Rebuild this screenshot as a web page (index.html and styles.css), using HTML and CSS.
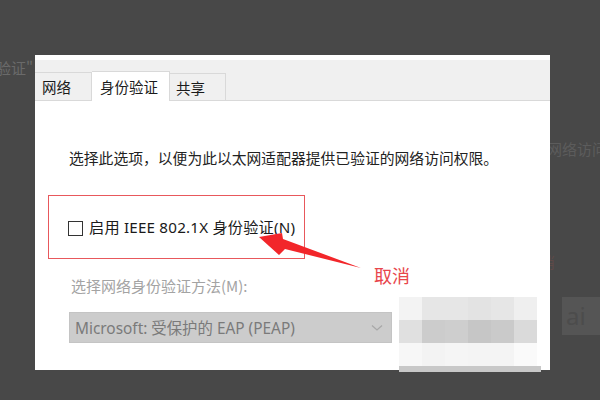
FILE: index.html
```html
<!DOCTYPE html>
<html lang="zh-CN">
<head>
<meta charset="utf-8">
<link rel="stylesheet" href="styles.css">
</head>
<body>
<div class="desk">
  <div class="bg-text bg-left">验证"</div>
  <div class="bg-text bg-right">网络访问</div>
  <div class="bg-text bg-red">消</div>
  <div class="bg-box">ai</div>

  <div class="dialog">
    <div class="tabbar">
      <div class="tab tab-net">网络</div>
      <div class="tab tab-active">身份验证</div>
      <div class="tab tab-share">共享</div>
    </div>
    <div class="content">
      <p class="desc">选择此选项，以便为此以太网适配器提供已验证的网络访问权限。</p>
      <div class="redbox">
        <span class="check"></span>
        <span class="check-label">启用 IEEE 802.1X 身份验证(N)</span>
      </div>
      <p class="method">选择网络身份验证方法(M):</p>
      <div class="select">
        <span>Microsoft: 受保护的 EAP (PEAP)</span>
        <svg class="chev" width="12" height="8" viewBox="0 0 12 8"><path d="M1 1.5 L6 6 L11 1.5" fill="none" stroke="#a8a8a8" stroke-width="1.3"/></svg>
      </div>
    </div>
  </div>

  <svg class="arrow" width="600" height="400" viewBox="0 0 600 400">
    <polygon points="259,237 282,233 283,239 361,268 285,249 279,255" fill="#f2262a"/>
  </svg>
  <div class="cancel">取消</div>

  <div class="mosaic">
    <div class="mrow">
      <i style="background:#f3f3f3"></i><i style="background:#e6e6e6"></i><i style="background:#e6e6e6"></i><i style="background:#e3e3e3"></i><i style="background:#e6e6e6"></i><i style="background:#efefef"></i>
    </div>
    <div class="mrow">
      <i style="background:#e0e0e0"></i><i style="background:#cccccc"></i><i style="background:#cecece"></i><i style="background:#c6c6c6"></i><i style="background:#cacaca"></i><i style="background:#dadada"></i>
    </div>
    <div class="mrow">
      <i style="background:#f7f7f7"></i><i style="background:#f3f3f3"></i><i style="background:#f5f5f5"></i><i style="background:#f4f4f4"></i><i style="background:#f4f4f4"></i><i style="background:#fafafa"></i>
    </div>
    <div class="mbar"></div>
  </div>
</div>
</body>
</html>
```
FILE: styles.css
```css
* { box-sizing: border-box; }
html, body { margin: 0; padding: 0; }
body {
  background: #484848;
  font-family: "Noto Sans", "Noto Sans CJK SC", sans-serif;
}
.desk {
  position: relative;
  width: 600px;
  height: 400px;
  overflow: hidden;
  padding-top: 55px;
  padding-left: 35px;
}
.bg-text {
  position: absolute;
  font-family: "Noto Sans CJK SC", sans-serif;
  font-size: 15px;
  line-height: 18px;
  color: #6a6a6a;
  white-space: nowrap;
}
.bg-left { left: -4px; top: 59px; }
.bg-right { left: 547px; top: 140px; color: #5c5c5c; }
.bg-red { left: 540px; top: 253px; color: #5e4a48; }
.bg-box {
  position: absolute;
  left: 562px; top: 297px;
  width: 40px; height: 38px;
  background: #555555;
  color: #4c4c4c;
  font-size: 24px;
  line-height: 38px;
  padding-left: 4px;
}
.dialog {
  position: relative;
  width: 515px;
  height: 315px;
  background: #fff;
  padding-top: 5px;
  display: flex;
  flex-direction: column;
}
.tabbar {
  height: 41px;
  background: #f0f0f0;
  border-bottom: 1px solid #d9d9d9;
  display: flex;
  align-items: flex-end;
}
.tab {
  font-family: "Noto Sans CJK SC", sans-serif;
  font-size: 14.5px;
  color: #1a1a1a;
  border-top: 1px solid #d9d9d9;
  border-right: 1px solid #d9d9d9;
  display: flex;
  align-items: center;
  background: #f0f0f0;
}
.tab-net { width: 57px; height: 28px; padding-left: 7px; }
.tab-active {
  width: 78px; height: 30px;
  margin-bottom: -1px;
  background: #fff;
  padding-left: 8px;
  padding-bottom: 1px;
}
.tab-share { width: 56px; height: 27px; padding-left: 6px; }
.content {
  flex: 1;
  display: flex;
  flex-direction: column;
  align-items: flex-start;
}
.desc {
  margin: 47px 0 0 34px;
  font-family: "Noto Sans CJK SC", sans-serif;
  font-size: 14.8px;
  line-height: 20px;
  color: #222;
  white-space: nowrap;
}
.redbox {
  margin: 27px 0 0 13px;
  width: 257px;
  height: 64px;
  border: 1.5px solid #e8585c;
  display: flex;
  align-items: center;
  padding: 3px 0 0 19px;
}
.check {
  width: 15px;
  height: 15px;
  border: 1px solid #333;
  background: #fff;
  margin-right: 6px;
  flex: none;
}
.check-label {
  font-family: "Noto Sans", "Noto Sans CJK SC", sans-serif;
  font-size: 15.2px;
  line-height: 20px;
  letter-spacing: 0.2px;
  color: #1a1a1a;
  white-space: nowrap;
  margin-bottom: 4px;
}
.method {
  margin: 17px 0 0 36px;
  font-family: "Noto Sans CJK SC", sans-serif;
  font-size: 15px;
  line-height: 20px;
  color: #a3a3a3;
  white-space: nowrap;
}
.select {
  margin: 16px 0 0 34px;
  width: 323px;
  height: 31px;
  background: #cccccc;
  border: 1px solid #c4c4c4;
  display: flex;
  align-items: center;
  justify-content: space-between;
  padding: 0 8px 0 5px;
  font-family: "Noto Sans", "Noto Sans CJK SC", sans-serif;
  font-size: 15.4px;
  color: #7a7a7a;
  white-space: nowrap;
}
.arrow {
  position: absolute;
  left: 0; top: 0;
  pointer-events: none;
}
.cancel {
  position: absolute;
  left: 374px;
  top: 262px;
  font-family: "Noto Sans CJK SC", sans-serif;
  font-size: 18px;
  line-height: 26px;
  color: #e8464c;
}
.mosaic {
  position: absolute;
  left: 399px;
  top: 297px;
  display: flex;
  flex-direction: column;
}
.mrow { display: flex; }
.mrow i { display: block; width: 23px; height: 23px; }
.mbar { width: 142px; height: 6px; background: #c8c8c8; }
```
